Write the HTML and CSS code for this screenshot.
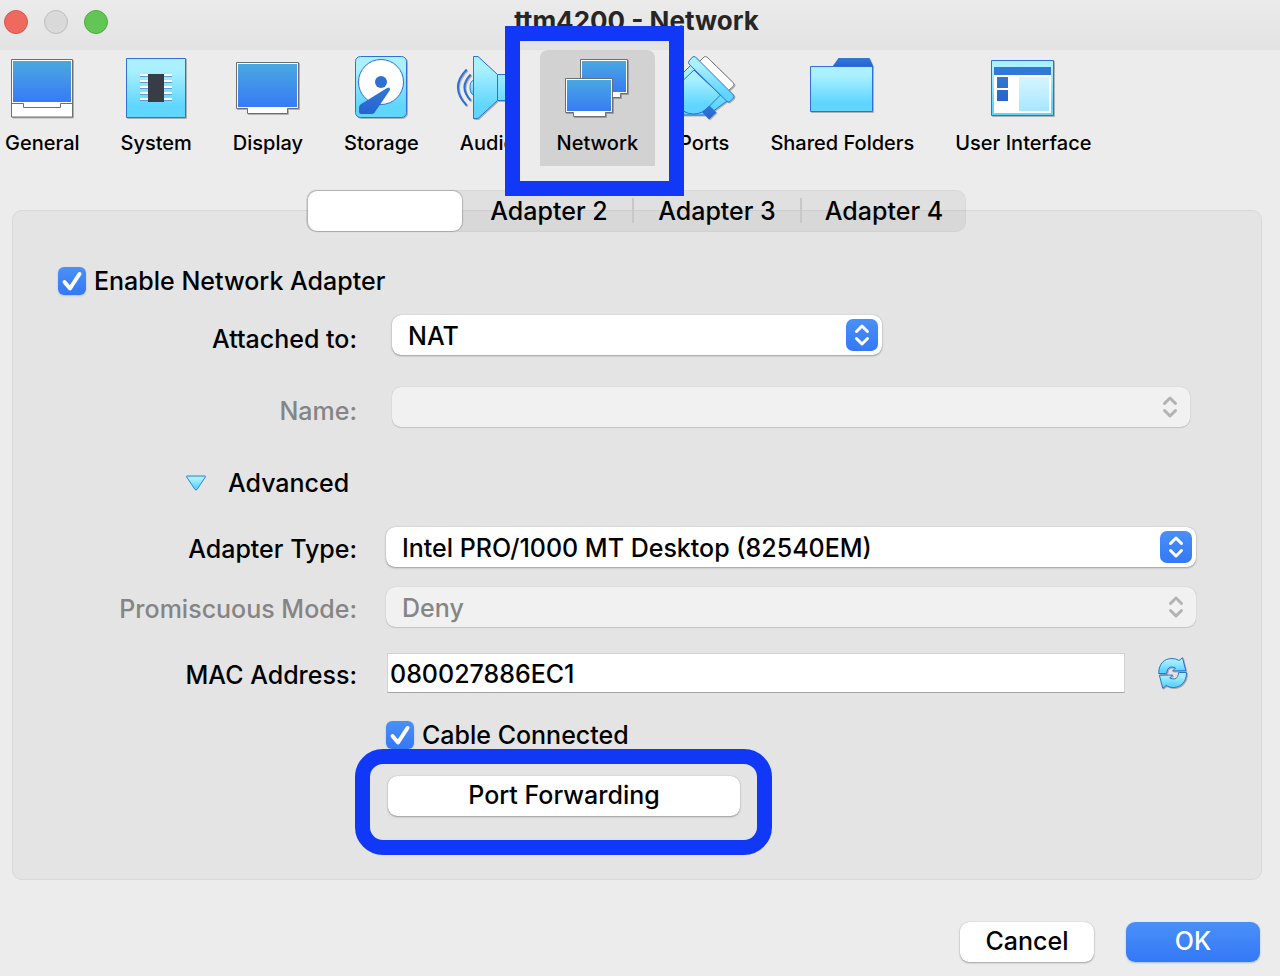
FILE: index.html
```html
<!DOCTYPE html>
<html lang="en">
<head>
<meta charset="utf-8">
<title>ttm4200 - Network</title>
<link rel="stylesheet" href="styles.css">
</head>
<body>
<svg class="defs" aria-hidden="true">
  <defs>
    <linearGradient id="screen" x1="0" y1="0" x2="0" y2="1"><stop offset="0" stop-color="#4aa8df"/><stop offset="1" stop-color="#367bf7"/></linearGradient>
    <linearGradient id="sky" x1="0" y1="0" x2="0" y2="1"><stop offset="0.2" stop-color="#aaf0ff"/><stop offset="0.8" stop-color="#60d6ff"/></linearGradient>
    <linearGradient id="pale" x1="0" y1="0" x2="0" y2="1"><stop offset="0" stop-color="#d5f6ff"/><stop offset="1" stop-color="#a8e6ff"/></linearGradient>
    <linearGradient id="deep" x1="0" y1="0" x2="0" y2="1"><stop offset="0" stop-color="#3079d4"/><stop offset="1" stop-color="#2862d0"/></linearGradient>
    <symbol id="updown" viewBox="0 0 32 32"><path d="M10.500 12.500 16 7l5.500 5.500M10.500 19.500 16 25l5.500-5.500" fill="none" stroke="currentColor" stroke-width="3" stroke-linecap="round" stroke-linejoin="round"/></symbol>
  </defs>
</svg>
<div class="window">
  <header class="titlebar">
    <div class="lights">
      <button class="light close" type="button" aria-label="Close"></button>
      <button class="light minimize" type="button" aria-label="Minimize" disabled></button>
      <button class="light maximize" type="button" aria-label="Zoom"></button>
    </div>
    <h1 class="title">ttm4200 - Network</h1>
  </header>

  <nav class="toolbar" aria-label="Settings">
    <button class="tool" type="button">
      <svg class="icon" viewBox="0 0 64 64"><g stroke="#6e6e6e" fill="#fff"><path d="M1.500 3.500h61v57.500h-61z"/><path d="M1.500 47.500h12v4h37v-4h12" fill="none"/></g><path d="M3 5h58v41H3z" fill="url(#screen)"/></svg>
      <span>General</span>
    </button>
    <button class="tool" type="button">
      <svg class="icon" viewBox="0 0 64 64"><path d="M2.500 2.500h59v59h-59z" fill="url(#sky)" stroke="#2f6fd8"/><path d="M16 20.500h32M16 26.500h32M16 32.500h32M16 38.500h32M16 44.500h32" stroke="#5a9fd4"/><path d="M16 19h32M16 25h32M16 31h32M16 37h32M16 43h32" stroke="#fff" stroke-width="2"/><path d="M24 18h16v28H24z" fill="#373c47"/></svg>
      <span>System</span>
    </button>
    <button class="tool" type="button">
      <svg class="icon" viewBox="0 0 64 64"><path d="M.5 6.500h62v46h-11v5h-40v-5H.5z" fill="#fff" stroke="#6e6e6e"/><path d="M2 8h59v43H2z" fill="url(#screen)"/></svg>
      <span>Display</span>
    </button>
    <button class="tool" type="button">
      <svg class="icon" viewBox="0 0 64 64"><rect x="6.500" y=".5" width="51" height="61" rx="5" fill="url(#sky)" stroke="#2f6fd8"/><circle cx="32" cy="26" r="22.500" fill="#fff" stroke="#2f6fd8"/><circle cx="32" cy="26" r="6" fill="#2d70d2"/><path d="M38 32q3-1.500 3 2L26 56q-1 2-3 2H12q-2 0-2-2v-4q0-3 3-4.500z" fill="url(#deep)"/></svg>
      <span>Storage</span>
    </button>
    <button class="tool" type="button">
      <svg class="icon" viewBox="0 0 64 64"><g fill="none" stroke="#2f6fd8" stroke-width="2"><path d="M10.700 13.500q-17.500 17.500 0 36M14.700 18.500q-12.500 12.500 0 26"/></g><g fill="url(#sky)" stroke="#2f6fd8"><path d="M18 24q-4 1-4 7.500t4 7.500z"/><path d="M17.500 .5H22l19.500 18H60v26H41.500L22 62.500h-4.500z"/><path d="M41.500 18.500v26" fill="none"/></g></svg>
      <span>Audio</span>
    </button>
    <button class="tool selected" type="button" aria-current="page">
      <svg class="icon" viewBox="0 0 64 64"><path d="M15.500 3.500h47v34h-7v4h-32v-4h-8z" fill="#fff" stroke="#6e6e6e"/><path d="M17 5h44v31H17z" fill="url(#screen)"/><path d="M.5 22.500h47v34h-7v4h-32v-4h-8z" fill="#fff" stroke="#6e6e6e"/><path d="M2 24h44v31H2z" fill="url(#screen)"/></svg>
      <span>Network</span>
      <i class="callout callout-network"></i>
    </button>
    <button class="tool" type="button">
      <svg class="icon" viewBox="0 0 64 64"><path d="M27 6 32 1q1.500-1 3 0l26.500 26q1 1.500 0 3L56 35z" fill="#fff" stroke="#777"/><g fill="url(#sky)" stroke="#2f6fd8" stroke-linejoin="round"><path d="M19 9 0 28v25l8 6h28l19-14z"/><path d="M48.500 39 38 49.500q-7 8.500-16.500 8.500Q10 58 4 46q-4-10 7-21.500L22 14z"/><path d="M22 14l26.500 25" fill="none"/><path d="M20.500 1q1.500-1 3 0L61.500 39q1 1.500 0 3L58 45.500q-1.500 1-3 0L17 8q-1-1.500 0-3z"/></g><path d="m37.500 49.500 7 7-7.500 7-7-7.500z" fill="url(#deep)"/></svg>
      <span>Ports</span>
    </button>
    <button class="tool" type="button">
      <svg class="icon" viewBox="0 0 64 64"><path d="m22.500 10.500 6-8.500h31l4 9z" fill="url(#deep)"/><path d="M.5 10.500h62v45H.5z" fill="url(#sky)" stroke="#2f6fd8"/></svg>
      <span>Shared Folders</span>
    </button>
    <button class="tool" type="button">
      <svg class="icon" viewBox="0 0 64 64"><path d="M.5 4.500h62v55H.5z" fill="url(#sky)" stroke="#2f6fd8"/><path d="M3 19h57v38H3z" fill="#fff"/><path d="M3 11h57v8H3z" fill="#3079d4"/><path d="M6 21h11v11H6zM6 34h11v11H6z" fill="url(#deep)"/><path d="M28 21h30v34H28z" fill="url(#pale)"/></svg>
      <span>User Interface</span>
    </button>
  </nav>

  <main class="panel">
    <div class="tabs" role="tablist">
      <button class="tab active" type="button" role="tab" aria-selected="true" aria-label="Adapter 1"></button>
      <button class="tab" type="button" role="tab">Adapter 2</button>
      <button class="tab" type="button" role="tab">Adapter 3</button>
      <button class="tab" type="button" role="tab">Adapter 4</button>
    </div>

    <form class="form">
      <label class="check"><input type="checkbox" checked><svg class="tick" viewBox="0 0 28 28"><path d="m6.500 15 5.500 6.500L21.500 7" /></svg>Enable Network Adapter</label>

      <div class="row upper">
        <label for="attached">Attached to:</label>
        <div class="select short">
          <select id="attached"><option>NAT</option></select>
          <svg class="arrows"><use href="#updown"/></svg>
        </div>
      </div>
      <div class="row upper disabled">
        <label for="name">Name:</label>
        <div class="select">
          <select id="name" disabled><option></option></select>
          <svg class="arrows"><use href="#updown"/></svg>
        </div>
      </div>

      <button class="advanced" type="button" aria-expanded="true">
        <svg class="triangle" viewBox="0 0 20 16"><path d="M.7 1h18.600q.4.500 0 1L11 14.500q-1 1-2 0L.7 2q-.4-.5 0-1z" fill="url(#sky)" stroke="#2f7de0"/></svg>
        Advanced
      </button>

      <div class="row">
        <label for="type">Adapter Type:</label>
        <div class="select">
          <select id="type"><option>Intel PRO/1000 MT Desktop (82540EM)</option></select>
          <svg class="arrows"><use href="#updown"/></svg>
        </div>
      </div>
      <div class="row disabled">
        <label for="promiscuous">Promiscuous Mode:</label>
        <div class="select">
          <select id="promiscuous" disabled><option>Deny</option></select>
          <svg class="arrows"><use href="#updown"/></svg>
        </div>
      </div>
      <div class="row mac-row">
        <label for="mac">MAC Address:</label>
        <div class="mac">
          <input id="mac" type="text" value="080027886EC1">
          <button class="refresh" type="button" aria-label="Generate new address">
            <svg viewBox="0 0 30 32"><g fill="url(#sky)" stroke="#2f6fd8" stroke-linejoin="round"><path d="M.7 16.500C.7 6.500 6.500 1.500 14 1.500q4 0 7 2L24.500.7l3.300 13L14.500 14l3-3q-5.500-2.500-8 1.500l-1 4z"/><path d="M28.500 15.500c0 10-5.800 15-13.300 15q-4 0-7-2l-3.500 2.800-3.300-13 13.300-.3-3 3q5.500 2.500 8-1.500l1-4z"/></g></svg>
          </button>
        </div>
      </div>
      <div class="extras">
        <label class="check"><input type="checkbox" checked><svg class="tick" viewBox="0 0 28 28"><path d="m6.500 15 5.500 6.500L21.500 7" /></svg>Cable Connected</label>
        <button class="push forwarding" type="button">Port Forwarding<i class="callout callout-forwarding"></i></button>
      </div>
    </form>
  </main>

  <footer class="actions">
    <button class="push" type="button">Cancel</button>
    <button class="push primary" type="button">OK</button>
  </footer>
</div>
</body>
</html>
```
FILE: styles.css
```css
* { box-sizing: border-box; }

body {
  margin: 0;
  background: #ececec;
  color: #000;
  font: 500 25px/32px Inter, "Liberation Sans", sans-serif;
}

button, input, select { font: inherit; color: inherit; }
button { border: 0; padding: 0; background: none; }
.defs { position: absolute; width: 0; height: 0; }

.window { min-height: 100vh; display: flex; flex-direction: column; }

.titlebar {
  display: grid;
  grid-template-columns: 1fr auto 1fr;
  height: 50px;
  padding: 0 11px 0 4px;
  background: linear-gradient(#ebebeb, #e3e3e3);
}
.lights { display: flex; gap: 16px; padding-top: 10px; }
.light { width: 24px; height: 24px; border-radius: 50%; border: 1px solid; }
.close { background: #ee6a5f; border-color: #d9564b; }
.minimize { background: #d9d9d9; border-color: #bdbdbd; }
.maximize { background: #62c655; border-color: #4fab40; }
.title { margin: 0; padding-top: 5px; font-size: 26px; font-weight: 700; color: #262626; }

.toolbar { display: flex; gap: 41px; padding-left: 5px; }
.tool {
  display: flex;
  flex-direction: column;
  align-items: center;
  gap: 10px;
  height: 116px;
  padding-top: 6px;
  font-size: 20px;
  line-height: 26px;
  font-weight: 500;
  white-space: nowrap;
}
.icon {
  width: 64px;
  height: 64px;
  margin: 0 -10px;
  filter: drop-shadow(1px 1px 0 rgba(0, 0, 0, .25));
}
.tool.selected {
  position: relative;
  z-index: 1;
  margin: 0 -17px;
  padding-left: 17px;
  padding-right: 17px;
  background: #d2d2d2;
  border-radius: 8px 8px 0 0;
}

.callout { position: absolute; border: 15px solid #1138f7; pointer-events: none; }
.callout-network { inset: -24px -29px -30px -35px; }
.callout-forwarding { inset: -27px -32px -39px -33px; border-radius: 28px; }

.panel {
  margin: 44px 18px 0 12px;
  padding: 0 2px 63px 0;
  background: #e4e4e4;
  border: 1px solid #d8d8d8;
  border-radius: 10px;
}
.tabs {
  display: grid;
  grid-template-columns: 158px 168px 168px 166px;
  width: max-content;
  margin: -21px auto 0;
  background: rgba(0, 0, 0, .05);
  box-shadow: inset 0 0 0 1px rgba(0, 0, 0, .03);
  border-radius: 10px;
}
.tab { height: 42px; border-left: 2px solid transparent; }
.tab + .tab + .tab {
  border-image: linear-gradient(transparent 20%, #c8c8c8 20%, #c8c8c8 78%, transparent 78%) 1;
}
.tab.active {
  height: 40px;
  margin: 1px 2px;
  background: #fff;
  border: 0;
  border-radius: 9px;
  box-shadow: 0 0 1px 1px rgba(0, 0, 0, .2);
}

.form { display: flex; flex-direction: column; padding: 33px 63px 0 45px; }

.check { display: flex; align-items: center; position: relative; gap: 8px; width: max-content; }
.check input {
  appearance: none;
  width: 28px;
  height: 28px;
  margin: 0;
  border-radius: 6px;
  background: linear-gradient(#4a90f8, #3478f6);
  box-shadow: 0 1px 2px rgba(52, 120, 246, .3);
}
.tick { position: absolute; left: 0; width: 28px; height: 28px; visibility: hidden; pointer-events: none; }
input:checked + .tick { visibility: visible; }
.tick path { fill: none; stroke: #fff; stroke-width: 4px; stroke-linecap: round; stroke-linejoin: round; }

.row {
  display: grid;
  grid-template-columns: 299px 1fr;
  gap: 29px;
  align-items: center;
  margin-bottom: 20px;
}
.row > label { text-align: right; padding-top: 3px; }
.row.upper { margin: 18px 0 14px; }
.row.upper > label { padding-top: 8px; }
.row.upper .select { margin: 0 6px; }
.row.upper .short { max-width: 490px; }
.row.disabled > label { color: #858585; }

.select { position: relative; }
.select select {
  display: block;
  appearance: none;
  width: 100%;
  height: 40px;
  padding: 2px 48px 0 16px;
  border: 0;
  border-radius: 9px;
  background: #fff;
  box-shadow: 0 0 1px rgba(0, 0, 0, .3), 0 1px 2px rgba(0, 0, 0, .3);
}
.arrows {
  position: absolute;
  top: 4px;
  right: 4px;
  width: 32px;
  height: 32px;
  border-radius: 7px;
  color: #fff;
  background: linear-gradient(#4a90f8, #3478f6);
  pointer-events: none;
}
.select select:disabled {
  color: #858585;
  opacity: 1;
  background: #f1f1f1;
  box-shadow: 0 0 1px rgba(0, 0, 0, .25), 0 1px 1px rgba(0, 0, 0, .12);
}
.disabled .arrows { color: #b3b3b3; background: none; }

.advanced {
  display: flex;
  align-items: center;
  gap: 22px;
  align-self: flex-start;
  margin: 26px 0 28px 128px;
}
.triangle { width: 20px; height: 16px; }

.mac-row { margin-top: 6px; margin-bottom: 26px; }
.mac { display: flex; align-items: center; justify-content: space-between; padding: 0 8px 0 1px; }
.mac input {
  flex: 1;
  min-width: 0;
  height: 40px;
  margin-right: 33px;
  padding: 2px 2px 0;
  border: 1px solid #d2d2d2;
  border-bottom-color: #a6a6a6;
  background: #fff;
}
.refresh { display: flex; }
.refresh svg { width: 30px; height: 32px; filter: drop-shadow(1px 1px 0 rgba(0, 0, 0, .25)); }

.extras { margin-left: 328px; display: flex; flex-direction: column; align-items: flex-start; gap: 25px; }

.push {
  height: 40px;
  min-width: 134px;
  padding-bottom: 2px;
  border-radius: 9px;
  background: #fff;
  box-shadow: 0 0 1px rgba(0, 0, 0, .3), 0 1px 2px rgba(0, 0, 0, .3);
}
.forwarding { position: relative; width: 352px; margin-left: 2px; }
.primary { color: #fff; background: linear-gradient(#4a90f8, #3478f6); box-shadow: 0 1px 2px rgba(52, 120, 246, .4); }

.actions { display: flex; justify-content: flex-end; gap: 32px; margin-top: auto; padding: 32px 20px 14px; }
```
